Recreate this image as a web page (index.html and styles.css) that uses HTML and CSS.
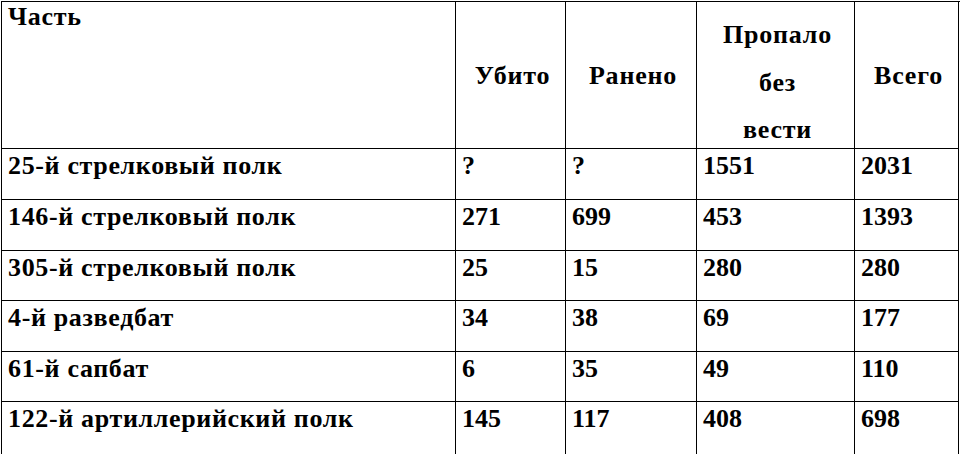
FILE: index.html
```html
<!DOCTYPE html>
<html lang="ru">
<head>
<meta charset="utf-8">
<title>Потери</title>
<link rel="stylesheet" href="styles.css">
</head>
<body>
<div class="losses" role="table">
  <div class="row head-row" role="row">
    <div class="cell unit-head" role="columnheader">Часть</div>
    <div class="cell num-head" role="columnheader">Убито</div>
    <div class="cell num-head" role="columnheader">Ранено</div>
    <div class="cell num-head missing-head" role="columnheader">Пропало<br>без<br>вести</div>
    <div class="cell num-head" role="columnheader">Всего</div>
  </div>
  <div class="row r51" role="row"><div class="cell name">25-й стрелковый полк</div><div class="cell">?</div><div class="cell">?</div><div class="cell">1551</div><div class="cell">2031</div></div>
  <div class="row r51" role="row"><div class="cell name">146-й стрелковый полк</div><div class="cell">271</div><div class="cell">699</div><div class="cell">453</div><div class="cell">1393</div></div>
  <div class="row r50" role="row"><div class="cell name">305-й стрелковый полк</div><div class="cell">25</div><div class="cell">15</div><div class="cell">280</div><div class="cell">280</div></div>
  <div class="row r51" role="row"><div class="cell name">4-й разведбат</div><div class="cell">34</div><div class="cell">38</div><div class="cell">69</div><div class="cell">177</div></div>
  <div class="row r50" role="row"><div class="cell name">61-й сапбат</div><div class="cell">6</div><div class="cell">35</div><div class="cell">49</div><div class="cell">110</div></div>
  <div class="row r60" role="row"><div class="cell name">122-й артиллерийский полк</div><div class="cell">145</div><div class="cell">117</div><div class="cell">408</div><div class="cell">698</div></div>
</div>
</body>
</html>
```

FILE: styles.css
```css
html, body {
  margin: 0;
  padding: 0;
  background: #fff;
}

body {
  padding: 1px 0 0 1px;
  overflow: hidden;
}

.losses {
  width: 958px;
  border-top: 1px solid #000;
  border-left: 1px solid #000;
  font-family: "Liberation Serif", serif;
  font-weight: 700;
  font-size: 26px;
  color: #000;
}

.row {
  display: grid;
  grid-template-columns: 454px 110px 131px 158px 104px;
}

.cell {
  box-sizing: border-box;
  border-right: 1px solid #000;
  border-bottom: 1px solid #000;
  padding: 2px 0 0 6px;
  line-height: 30px;
  white-space: nowrap;
}

.name {
  letter-spacing: 0.65px;
}

.head-row { grid-template-rows: 147px; }
.r51 { grid-template-rows: 51px; }
.r50 { grid-template-rows: 50px; }
.r60 { grid-template-rows: 60px; }

.head-row .unit-head {
  padding: 0 0 0 6px;
  letter-spacing: 0.7px;
}

.num-head {
  display: flex;
  flex-direction: column;
  align-items: center;
  justify-content: center;
  text-align: center;
  line-height: 47px;
  padding: 0 0 0 4px;
  letter-spacing: 0.8px;
}

.missing-head {
  display: block;
  line-height: 47.5px;
  padding-top: 9px;
}
```
